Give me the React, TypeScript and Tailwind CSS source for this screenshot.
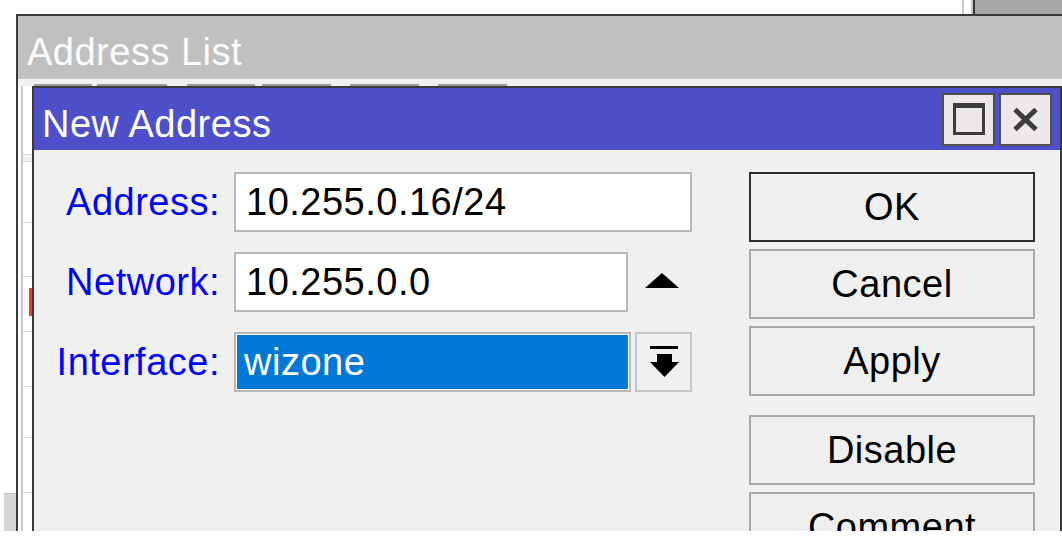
const FONT = "font-['Liberation_Sans','Arial',sans-serif] tracking-[0.5px]";

function TitleButton({ kind }: { kind: "max" | "close" }) {
  return (
    <div className="w-[53px] h-[53px] border-2 border-[#505050] bg-[#ebe7eb] flex items-center justify-center">
      {kind === "max" ? (
        <svg width="32" height="32" viewBox="0 0 32 32">
          <rect x="1.5" y="2.5" width="29" height="28" fill="none" stroke="#3c3c3c" strokeWidth="3" />
          <rect x="0" y="0" width="32" height="5" fill="#3c3c3c" />
        </svg>
      ) : (
        <svg width="27" height="25" viewBox="0 0 27 25">
          <path d="M3 2.5 L24 22.5 M24 2.5 L3 22.5" stroke="#3c3c3c" strokeWidth="5" strokeLinecap="butt" />
        </svg>
      )}
    </div>
  );
}

function ActionButton({ label, primary = false, className = "" }: { label: string; primary?: boolean; className?: string }) {
  return (
    <div
      className={`h-[70px] shrink-0 flex items-center justify-center border-2 bg-[#efefef] text-[38px] leading-none text-black ${
        primary ? "border-[#2e2e2e]" : "border-[#a9a9a9]"
      } ${className}`}
    >
      {label}
    </div>
  );
}

function FieldRow({ label, children }: { label: string; children: React.ReactNode }) {
  return (
    <div className="flex items-center h-[60px] gap-[14px]">
      <div className="w-[186px] text-right text-[38px] leading-none text-[#0000ff]">{label}</div>
      <div className="flex items-stretch h-full w-[458px]">{children}</div>
    </div>
  );
}

export default function App() {
  // row heights of the list behind the dialog
  const cellHeights = [69, 7, 61, 54, 55, 55, 51, 55, 40];

  return (
    <div className={`w-[1062px] h-[536px] bg-white overflow-hidden ${FONT}`}>
      <div className="h-[531px] flex flex-col overflow-hidden">
        {/* window behind, top right */}
        <div className="h-[14px] flex shrink-0">
          <div className="flex-1" />
          <div className="w-[11px] border-x-2 border-[#c8c8c8] bg-white" />
          <div className="w-[89px] bg-[#a6a6a6] border-l-2 border-[#333]" />
        </div>

        <div className="flex flex-1 min-h-0">
          <div className="w-[16px] flex flex-col justify-end pl-[4px]">
            <div className="h-[38px] bg-[#d6d6d6] border-t border-[#bcbcbc]" />
          </div>

          {/* Address List window */}
          <div className="flex-1 relative flex flex-col border-l-2 border-t-2 border-[#3a3a3a]">
            <div className="h-[63px] shrink-0 bg-[#c0c0c0] flex items-center pl-[9px] pt-[8px] text-[38px] leading-none text-[#fbfbfb]">
              Address List
            </div>
            <div className="h-[7px] shrink-0 bg-[#f0f0f0] flex items-end pl-[16px]">
              <div className="w-[58px] h-[2px] bg-[#9a9a9a]" />
              <div className="w-[5px]" />
              <div className="w-[70px] h-[2px] bg-[#9a9a9a]" />
              <div className="w-[20px]" />
              <div className="w-[68px] h-[2px] bg-[#9a9a9a]" />
              <div className="w-[7px]" />
              <div className="w-[69px] h-[2px] bg-[#9a9a9a]" />
              <div className="w-[19px]" />
              <div className="w-[69px] h-[2px] bg-[#9a9a9a]" />
              <div className="w-[19px]" />
              <div className="w-[69px] h-[2px] bg-[#9a9a9a]" />
            </div>
            <div className="flex-1 flex min-h-0">
              <div className="ml-[3px] w-[11px] border-l-2 border-[#c8c8c8] bg-white flex flex-col">
                {cellHeights.map((h, i) => (
                  <div
                    key={i}
                    style={{ height: h }}
                    className={`shrink-0 border-b border-[#dadada] relative ${i === 1 ? "bg-[#f0f0f0]" : ""}`}
                  >
                    {i === 4 ? <div className="absolute right-0 top-[11px] w-[3px] h-[28px] bg-[#e8401a]" /> : null}
                  </div>
                ))}
              </div>
            </div>

            {/* New Address dialog */}
            <div className="absolute left-[14px] right-0 top-[70px] h-[460px] flex flex-col border-2 border-b-0 border-[#3a3a3a] bg-[#f0f0f0]">
              <div className="h-[62px] shrink-0 bg-[#4e50ca] flex items-center justify-between pl-[8px] pr-[8px]">
                <span className="text-[38px] leading-none text-white pt-[9px]">New Address</span>
                <div className="flex gap-[4px]">
                  <TitleButton kind="max" />
                  <TitleButton kind="close" />
                </div>
              </div>

              <div className="flex-1 flex pt-[22px]">
                <div className="flex flex-col gap-[20px]">
                  <FieldRow label="Address:">
                    <div className="flex-1 border-2 border-[#b8b8b8] bg-white flex items-center pl-[10px] text-[38px] leading-none text-black">
                      10.255.0.16/24
                    </div>
                  </FieldRow>
                  <FieldRow label="Network:">
                    <div className="w-[394px] border-2 border-[#b8b8b8] bg-white flex items-center pl-[10px] text-[38px] leading-none text-black">
                      10.255.0.0
                    </div>
                    <div className="flex-1 flex items-center justify-center pl-[4px] pb-[3px]">
                      <svg width="34" height="15" viewBox="0 0 34 15">
                        <polygon points="0,15 34,15 17,0" fill="#000" />
                      </svg>
                    </div>
                  </FieldRow>
                  <FieldRow label="Interface:">
                    <div className="w-[397px] border-2 border-[#b8b8b8] bg-white p-[1px] flex">
                      <div className="flex-1 bg-[#0078d7] flex items-center pl-[7px] text-[38px] leading-none text-white">
                        wizone
                      </div>
                    </div>
                    <div className="ml-[4px] flex-1 border-2 border-[#c6c6c6] bg-[#f0f0f0] flex items-center justify-center pl-[1px] pb-[2px]">
                      <svg width="29" height="31" viewBox="0 0 29 31">
                        <rect x="0" y="0" width="28" height="3" fill="#000" />
                        <rect x="7" y="8" width="15" height="9" fill="#000" />
                        <polygon points="0,16 29,16 14.5,31" fill="#000" />
                      </svg>
                    </div>
                  </FieldRow>
                </div>

                <div className="ml-[57px] w-[286px] flex flex-col gap-[7px]">
                  <ActionButton label="OK" primary />
                  <ActionButton label="Cancel" />
                  <ActionButton label="Apply" />
                  <ActionButton label="Disable" className="mt-[12px]" />
                  <ActionButton label="Comment" />
                </div>
              </div>
            </div>
          </div>
        </div>
      </div>
    </div>
  );
}
